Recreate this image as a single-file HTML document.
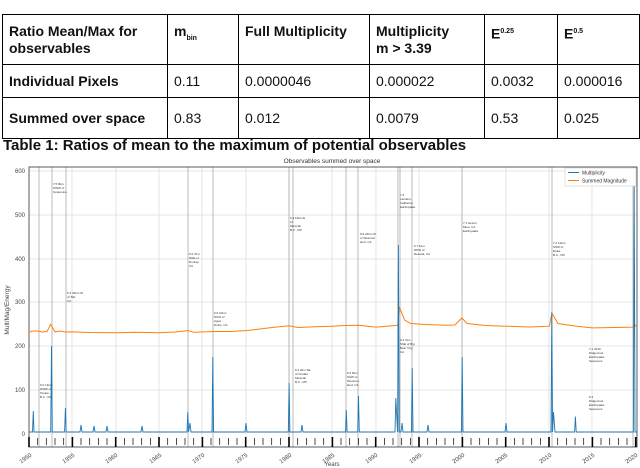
<!DOCTYPE html>
<html><head><style>
body{margin:0;width:640px;height:468px;background:#fff;overflow:hidden;font-family:"Liberation Sans",Arial,sans-serif;position:relative}
table{position:absolute;left:2px;top:14px;border-collapse:collapse;width:637px;table-layout:fixed}
td{border:1.5px solid #000;font-size:14px;padding:0 6px;vertical-align:top;color:#111;line-height:17px;overflow:hidden;white-space:nowrap}
tr.h td{height:50px;padding-top:8px;padding-bottom:0;font-weight:bold;box-sizing:border-box}
tr.r1 td{height:33px;vertical-align:middle;box-sizing:border-box}
tr.r2 td{height:41px;vertical-align:middle;box-sizing:border-box}
td.b{font-weight:bold}
sub,sup{font-size:7px}
.cap{position:absolute;left:3px;top:137px;font-size:15px;font-weight:bold;color:#111}
svg{position:absolute;left:0;top:0}
.t{font-size:3px;fill:#333}
</style></head><body>
<table>
<colgroup><col style="width:165px"><col style="width:71px"><col style="width:131px"><col style="width:115px"><col style="width:73px"><col style="width:82px"></colgroup>
<tr class="h"><td>Ratio Mean/Max for<br>observables</td><td>m<sub>bin</sub></td><td>Full Multiplicity</td><td>Multiplicity<br>m &gt; 3.39</td><td>E<sup>0.25</sup></td><td>E<sup>0.5</sup></td></tr>
<tr class="r1"><td class="b">Individual Pixels</td><td>0.11</td><td>0.0000046</td><td>0.000022</td><td>0.0032</td><td>0.000016</td></tr>
<tr class="r2"><td class="b">Summed over space</td><td>0.83</td><td>0.012</td><td>0.0079</td><td>0.53</td><td>0.025</td></tr>
</table>
<div class="cap">Table 1: Ratios of mean to the maximum of potential observables</div>
<svg width="640" height="468" viewBox="0 0 640 468" font-family="Liberation Sans, sans-serif">
<text x="332" y="163" font-size="6.5" text-anchor="middle" fill="#333">Observables summed over space</text>
<g stroke="#ddd" stroke-width="0.8">
<line x1="29" y1="390" x2="637" y2="390"/><line x1="29" y1="346" x2="637" y2="346"/><line x1="29" y1="302" x2="637" y2="302"/><line x1="29" y1="259" x2="637" y2="259"/><line x1="29" y1="215" x2="637" y2="215"/><line x1="29" y1="171" x2="637" y2="171"/>
<line x1="72" y1="167" x2="72" y2="447"/><line x1="116" y1="167" x2="116" y2="447"/><line x1="159" y1="167" x2="159" y2="447"/><line x1="202" y1="167" x2="202" y2="447"/><line x1="246" y1="167" x2="246" y2="447"/><line x1="289" y1="167" x2="289" y2="447"/><line x1="332" y1="167" x2="332" y2="447"/><line x1="376" y1="167" x2="376" y2="447"/><line x1="419" y1="167" x2="419" y2="447"/><line x1="462" y1="167" x2="462" y2="447"/><line x1="506" y1="167" x2="506" y2="447"/><line x1="549" y1="167" x2="549" y2="447"/><line x1="592" y1="167" x2="592" y2="447"/>
</g>
<g stroke="#aaa" stroke-width="0.8">
<line x1="39" y1="167" x2="39" y2="447"/><line x1="52" y1="167" x2="52" y2="447"/><line x1="66" y1="167" x2="66" y2="447"/><line x1="188" y1="167" x2="188" y2="447"/><line x1="213" y1="167" x2="213" y2="447"/><line x1="289" y1="167" x2="289" y2="447"/><line x1="293" y1="167" x2="293" y2="447"/><line x1="346" y1="167" x2="346" y2="447"/><line x1="358" y1="167" x2="358" y2="447"/><line x1="398" y1="167" x2="398" y2="447"/><line x1="400" y1="167" x2="400" y2="447"/><line x1="412" y1="167" x2="412" y2="447"/><line x1="462" y1="167" x2="462" y2="447"/><line x1="552" y1="167" x2="552" y2="447"/><line x1="633" y1="167" x2="633" y2="447"/>
</g>
<rect x="29" y="167" width="608" height="280" fill="none" stroke="#333" stroke-width="0.8"/>
<polyline fill="none" stroke="#ff7f0e" stroke-width="1" points="29,332.3 33,331 37.7,331 42,332 47,331.5 50.7,324.4 55,331.9 60,331 65,332 72.4,331.9 90,332.5 115.7,332.8 135,332.3 159,332.8 175,332 188.5,330.6 194,332.3 215,331.5 230,331.5 246,330.6 260,329 272,327.5 289,325.7 298,327.5 315,326.8 332,326.2 345,325.5 358.5,325.3 376,327.1 390,326 397.7,325.3 399.4,306.9 404.6,320 410.7,323.5 425,324.5 445.4,325.3 455,325 461.9,317.9 467,323.5 485,325.5 506,326.2 530,327 549.4,326.2 552,313.5 558,323.5 575,326 592,327.9 615,327.5 632.8,327.1 634.5,324.4 637,327.1"/>
<path fill="none" stroke="#1f77b4" stroke-width="0.9" d="M29,432 L32.5,432 L33.3,411 L34,432 L50.7,432 L51.5,346 L52.3,432 L64.6,432 L65.4,408 L66.2,432 L80,432 L81,425 L82,432 L93,432 L94,426 L95,432 L106,432 L107,426 L108,432 L141,432 L142,426 L143,432 L187,432 L187.8,412 L188.6,432 L190,423 L191,432 L212,432 L212.8,357 L213.6,432 L245,432 L246,423 L247,432 L288.3,432 L289.1,383 L289.9,432 L301,432 L302,425 L303,432 L345.5,432 L346.3,410 L347.1,432 L357.7,432 L358.5,396 L359.3,432 L395,432 L395.8,398 L397.6,432 L398.4,245 L399.2,432 L401,432 L402,423 L403,432 L411.4,432 L412.2,368 L413,432 L427,432 L428,425 L429,432 L461.4,432 L462.2,357 L463,432 L505,432 L506,423 L507,432 L551,432 L551.8,312 L552.6,432 L553.5,412 L555,432 L574.6,432 L575.4,416.5 L576.2,432 L633.4,432 L634.2,184 L635,432 L637,432"/>
<g stroke="#000" stroke-width="0.7">
<path d="M37.7,438v7M46.3,438v7M55,438v7M63.7,438v7M81,438v7M89.7,438v7M98.4,438v7M107,438v7M124.4,438v7M133,438v7M141.7,438v7M150.4,438v7M167.7,438v7M176.4,438v7M185,438v7M193.7,438v7M211,438v7M219.7,438v7M228.4,438v7M237,438v7M254.4,438v7M263,438v7M271.7,438v7M280.4,438v7M297.7,438v7M306.4,438v7M315,438v7M323.7,438v7M341,438v7M349.7,438v7M358.4,438v7M367,438v7M384.4,438v7M393,438v7M401.7,438v7M410.4,438v7M427.7,438v7M436.4,438v7M445,438v7M453.7,438v7M471,438v7M479.7,438v7M488.4,438v7M497,438v7M514.4,438v7M523,438v7M531.7,438v7M540.4,438v7M557.7,438v7M566.4,438v7M575,438v7M583.7,438v7M601,438v7M609.7,438v7M618.4,438v7M627,438v7"/>
</g>
<g stroke="#000" stroke-width="1.6">
<path d="M29,437v10M72.4,437v10M115.7,437v10M159,437v10M202.4,437v10M245.7,437v10M289,437v10M332.4,437v10M375.7,437v10M419,437v10M462.4,437v10M505.7,437v10M549,437v10M592.4,437v10M635.7,437v10"/>
</g>
<g font-size="6" fill="#444" text-anchor="end">
<text x="25" y="436">0</text><text x="25" y="392">100</text><text x="25" y="348">200</text><text x="25" y="304">300</text><text x="25" y="261">400</text><text x="25" y="217">500</text><text x="25" y="173">600</text>
</g>
<text transform="translate(9,310) rotate(-90)" font-size="6.5" fill="#444" text-anchor="middle">Mult/Mag/Energy</text>
<g font-size="6" fill="#444" text-anchor="end">
<text transform="translate(32,456) rotate(-35)">1950</text><text transform="translate(75,456) rotate(-35)">1955</text><text transform="translate(118,456) rotate(-35)">1960</text><text transform="translate(162,456) rotate(-35)">1965</text><text transform="translate(205,456) rotate(-35)">1970</text><text transform="translate(248,456) rotate(-35)">1975</text><text transform="translate(292,456) rotate(-35)">1980</text><text transform="translate(335,456) rotate(-35)">1985</text><text transform="translate(378,456) rotate(-35)">1990</text><text transform="translate(422,456) rotate(-35)">1995</text><text transform="translate(465,456) rotate(-35)">2000</text><text transform="translate(508,456) rotate(-35)">2005</text><text transform="translate(552,456) rotate(-35)">2010</text><text transform="translate(595,456) rotate(-35)">2015</text><text transform="translate(638,456) rotate(-35)">2020</text>
</g>
<text x="332" y="466" font-size="6" fill="#444" text-anchor="middle">Years</text>
<rect x="565" y="168" width="71" height="18" fill="#fff" stroke="#ccc" stroke-width="0.6"/>
<line x1="568" y1="172.5" x2="579" y2="172.5" stroke="#1f77b4" stroke-width="1"/>
<line x1="568" y1="180.5" x2="579" y2="180.5" stroke="#ff7f0e" stroke-width="1"/>
<text x="582" y="174.5" font-size="5" fill="#333">Multiplicity</text>
<text x="582" y="182.5" font-size="5" fill="#333">Summed Magnitude</text>
<g class="t">
<text x="53" y="185">7.5 8km</text><text x="53" y="189">WNW of</text><text x="53" y="193">Grapevine,</text>
<text x="67" y="294">6.4 32km W</text><text x="67" y="298">of Taft,</text><text x="67" y="302">CA</text>
<text x="40" y="386">6.0 14km</text><text x="40" y="390">WNW of</text><text x="40" y="394">Tecate,</text><text x="40" y="398">B.C., MX</text>
<text x="189" y="255">6.6 7km</text><text x="189" y="259">NNE of</text><text x="189" y="263">Dunlap,</text><text x="189" y="267">CA</text>
<text x="214" y="314">6.6 10km</text><text x="214" y="318">NNW of</text><text x="214" y="322">Agua</text><text x="214" y="326">Dulce, CA</text>
<text x="290" y="219">6.4 10km E</text><text x="290" y="223">of</text><text x="290" y="227">Mexicali</text><text x="290" y="231">B.C., MX</text>
<text x="295" y="371">6.4 2km SE</text><text x="295" y="375">of Ciudad</text><text x="295" y="379">Mexicali</text><text x="295" y="383">B.C., MX</text>
<text x="347" y="374">6.0 6km</text><text x="347" y="378">SSW of</text><text x="347" y="382">Westmor-</text><text x="347" y="386">land, CA</text>
<text x="360" y="235">6.6 22km W</text><text x="360" y="239">of Westmor</text><text x="360" y="243">land, CA</text>
<text x="400" y="196">7.3</text><text x="400" y="200">Landers,</text><text x="400" y="204">California</text><text x="400" y="208">Earthquake</text>
<text x="400" y="341">6.3 7km</text><text x="400" y="345">SSE of Big</text><text x="400" y="349">Bear City,</text><text x="400" y="353">CA</text>
<text x="414" y="247">6.7 1km</text><text x="414" y="251">NNW of</text><text x="414" y="255">Reseda, CA</text>
<text x="463" y="224">7.1 Hector</text><text x="463" y="228">Mine, CA</text><text x="463" y="232">Earthquake</text>
<text x="553" y="244">7.2 12km</text><text x="553" y="248">SSW of</text><text x="553" y="252">Delta,</text><text x="553" y="256">B.C., MX</text>
<text x="589" y="350">7.1 2019</text><text x="589" y="354">Ridgecrest</text><text x="589" y="358">Earthquake</text><text x="589" y="362">Sequence</text>
<text x="589" y="398">6.4</text><text x="589" y="402">Ridgecrest</text><text x="589" y="406">Earthquake</text><text x="589" y="410">Sequence</text>
</g>
</svg>
</body></html>
